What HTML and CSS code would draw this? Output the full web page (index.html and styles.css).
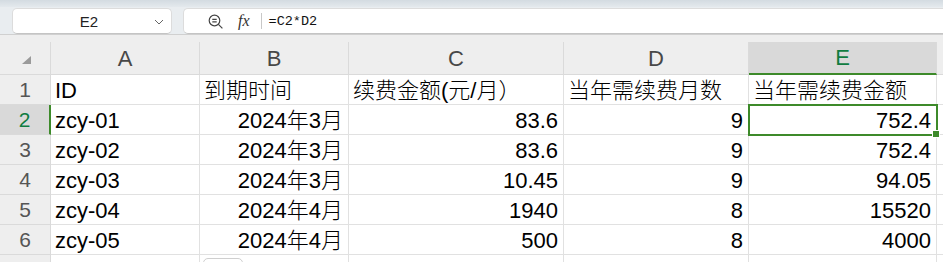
FILE: index.html
```html
<!DOCTYPE html>
<html lang="zh-CN">
<head>
    <meta charset="UTF-8">
    <title>续费表</title>
    <link rel="stylesheet" href="styles.css">
</head>
<body>
    <div class="ribbon-edge"></div>
    <div class="formula-bar">
        <div class="name-box">
            <span class="cell-ref">E2</span>
            <svg class="chevron" width="10" height="6" viewBox="0 0 10 6"><path d="M1 1l4 4 4-4" fill="none" stroke="#666" stroke-width="1"/></svg>
        </div>
        <div class="formula-box">
            <svg class="icon-search" width="16" height="16" viewBox="0 0 16 16">
                <circle cx="6.5" cy="6.5" r="5.3" fill="none" stroke="#444" stroke-width="1.2"/>
                <path d="M4.3 5.4h4.4M4.3 7.8h4.4M10.4 10.4l4 4" fill="none" stroke="#444" stroke-width="1.2"/>
            </svg>
            <span class="fx">fx</span>
            <span class="divider"></span>
            <span class="formula">=C2*D2</span>
        </div>
    </div>

    <div class="sheet">
        <div class="grid">
            <div class="corner"><span class="select-all"></span></div>
            <div class="col-head">A</div>
            <div class="col-head">B</div>
            <div class="col-head">C</div>
            <div class="col-head">D</div>
            <div class="col-head active">E</div>
            <div class="col-head"></div>

            <div class="row-head">1</div>
            <div class="cell">ID</div>
            <div class="cell">到期时间</div>
            <div class="cell">续费金额(元/月）</div>
            <div class="cell">当年需续费月数</div>
            <div class="cell">当年需续费金额</div>
            <div class="cell"></div>

            <div class="row-head active">2</div>
            <div class="cell">zcy-01</div>
            <div class="cell num">2024年3月</div>
            <div class="cell num">83.6</div>
            <div class="cell num">9</div>
            <div class="cell num selected">752.4<span class="fill-handle"></span></div>
            <div class="cell"></div>

            <div class="row-head">3</div>
            <div class="cell">zcy-02</div>
            <div class="cell num">2024年3月</div>
            <div class="cell num">83.6</div>
            <div class="cell num">9</div>
            <div class="cell num">752.4</div>
            <div class="cell"></div>

            <div class="row-head">4</div>
            <div class="cell">zcy-03</div>
            <div class="cell num">2024年3月</div>
            <div class="cell num">10.45</div>
            <div class="cell num">9</div>
            <div class="cell num">94.05</div>
            <div class="cell"></div>

            <div class="row-head">5</div>
            <div class="cell">zcy-04</div>
            <div class="cell num">2024年4月</div>
            <div class="cell num">1940</div>
            <div class="cell num">8</div>
            <div class="cell num">15520</div>
            <div class="cell"></div>

            <div class="row-head">6</div>
            <div class="cell">zcy-05</div>
            <div class="cell num">2024年4月</div>
            <div class="cell num">500</div>
            <div class="cell num">8</div>
            <div class="cell num">4000</div>
            <div class="cell"></div>

            <div class="row-head"></div>
            <div class="cell"></div>
            <div class="cell"><span class="quick-btn"></span></div>
            <div class="cell"></div>
            <div class="cell"></div>
            <div class="cell"></div>
            <div class="cell"></div>
        </div>
    </div>
</body>
</html>
```

FILE: styles.css
```css
body {
    margin: 0;
    background: #eeeeee;
    font-family: "Liberation Sans", "Noto Sans CJK SC", sans-serif;
    overflow: hidden;
}
.ribbon-edge {
    height: 7px;
    background: linear-gradient(#d3dbe1, #e4e9ed);
}
.formula-bar {
    display: flex;
    padding: 1px 0 0 12px;
    background: #e9edf0;
}
.name-box {
    width: 160px;
    height: 26px;
    box-sizing: border-box;
    background: #fff;
    border: 1px solid #dcdcdc;
    border-bottom-color: #c4c4c4;
    border-radius: 5px;
    display: flex;
    align-items: center;
    position: relative;
}
.cell-ref {
    flex: 1;
    text-align: center;
    font-size: 15px;
    color: #222;
    margin-right: 6px;
}
.chevron {
    position: absolute;
    right: 7px;
    top: 10px;
}
.formula-box {
    flex: 1;
    margin-left: 11px;
    height: 26px;
    box-sizing: border-box;
    background: #fff;
    border: 1px solid #dcdcdc;
    border-right: none;
    border-bottom-color: #c4c4c4;
    border-radius: 5px 0 0 5px;
    display: flex;
    align-items: center;
    padding-left: 24px;
}
.icon-search {
    margin-top: 1px;
}
.fx {
    font-family: "Liberation Serif", serif;
    font-style: italic;
    font-size: 16px;
    color: #333;
    margin-left: 14px;
}
.divider {
    width: 1px;
    height: 16px;
    background: #c8c8c8;
    margin-left: 11px;
}
.formula {
    font-family: "Liberation Mono", monospace;
    font-size: 13.5px;
    color: #111;
    margin-left: 7px;
}
.sheet {
    border-top: 1px solid #d0d0d0;
    padding-top: 7px;
}
.grid {
    display: grid;
    grid-template-columns: 51px 149px 149px 215px 185px 188px 40px;
    grid-template-rows: 33px repeat(7, 30px);
}
.corner {
    background: #eeeeee;
    border-right: 1px solid #dadada;
    border-bottom: 1px solid #dadada;
    position: relative;
}
.select-all {
    position: absolute;
    left: 22px;
    top: 14px;
    width: 0;
    height: 0;
    border-left: 9px solid transparent;
    border-bottom: 8px solid #9a9a9a;
}
.col-head {
    background: #eeeeee;
    border-right: 1px solid #dadada;
    border-bottom: 1px solid #dadada;
    text-align: center;
    font-size: 22px;
    line-height: 33px;
    color: #484848;
}
.col-head.active {
    background: #d9d9d9;
    color: #107c41;
    border-bottom: 2px solid #3d8a2a;
    line-height: 32px;
}
.row-head {
    background: #eeeeee;
    border-right: 1px solid #dadada;
    border-bottom: 1px solid #dadada;
    text-align: center;
    font-size: 21px;
    line-height: 30px;
    color: #555;
}
.row-head.active {
    background: #d9d9d9;
    color: #107c41;
    border-right: 2px solid #3d8a2a;
}
.cell {
    background: #fff;
    border-right: 1px solid #e1e1e1;
    border-bottom: 1px solid #e1e1e1;
    font-size: 22px;
    font-weight: 300;
    line-height: 31px;
    color: #000;
    padding: 0 4px;
    white-space: nowrap;
    position: relative;
}
.cell.num {
    text-align: right;
    padding-right: 5px;
}
.selected {
    outline: 2px solid #3d8a2a;
    outline-offset: -1px;
    z-index: 1;
}
.fill-handle {
    position: absolute;
    right: -4px;
    bottom: -4px;
    width: 6px;
    height: 6px;
    background: #3d8a2a;
    border: 1px solid #fff;
}
.quick-btn {
    position: absolute;
    left: 3px;
    top: 3px;
    width: 38px;
    height: 20px;
    border: 1px solid #cfcfcf;
    border-radius: 5px;
    background: #fff;
}
```
